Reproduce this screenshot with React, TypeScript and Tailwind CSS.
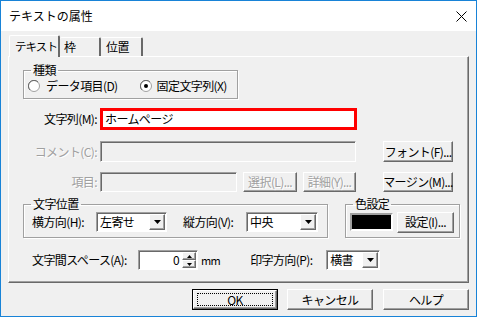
import React from "react";

const raised =
  "border border-t-white border-l-white border-r-[#696969] border-b-[#696969] shadow-[inset_-1px_-1px_0_#a0a0a0]";
const sunken =
  "border border-t-[#a0a0a0] border-l-[#a0a0a0] border-r-white border-b-white shadow-[inset_1px_1px_0_#696969]";
const etched = "border border-[#a0a0a0] shadow-[inset_1px_1px_0_#fff,1px_1px_0_#fff]";
const disabledText = "text-[#a0a0a0] [text-shadow:1px_1px_0_#fff]";

const Btn = ({ children, className = "", disabled = false }: { children: React.ReactNode; className?: string; disabled?: boolean }) => (
  <div className={`flex items-center justify-center bg-[#f0f0f0] ${raised} ${disabled ? disabledText : "text-black"} ${className}`}>
    {children}
  </div>
);

const Arrow = ({ size = 7 }: { size?: number }) => (
  <svg width={size} height={Math.ceil(size / 2)} viewBox={`0 0 ${size} ${Math.ceil(size / 2)}`}>
    <polygon points={`0,0 ${size},0 ${size / 2},${Math.ceil(size / 2)}`} fill="#000" />
  </svg>
);

const Combo = ({ value, className = "" }: { value: string; className?: string }) => (
  <div className={`flex items-center bg-white h-[20px] ${sunken} ${className}`}>
    <span className="flex-1 pl-[3px] leading-none">{value}</span>
    <div className={`w-[16px] h-[16px] mr-[1px] flex items-center justify-center bg-[#f0f0f0] ${raised}`}>
      <Arrow />
    </div>
  </div>
);

const Radio = ({ checked }: { checked?: boolean }) => (
  <svg width="12" height="12" viewBox="0 0 12 12" className="shrink-0">
    <circle cx="6" cy="6" r="5.5" fill="#fff" stroke="#a0a0a0" />
    <path d="M2 10 A5.5 5.5 0 0 1 10 2" fill="none" stroke="#696969" strokeWidth="1" />
    {checked && <circle cx="6" cy="6" r="2" fill="#000" />}
  </svg>
);

const Group = ({ title, className = "", children }: { title: string; className?: string; children: React.ReactNode }) => (
  <fieldset className={`${etched} ${className}`}>
    <legend className="ml-[7px] px-[2px] leading-[14px]">{title}</legend>
    {children}
  </fieldset>
);

export default function App() {
  return (
    <div className="w-[477px] h-[317px] flex flex-col border border-[#1883d7] bg-[#f0f0f0] text-[12px] text-black whitespace-nowrap tracking-[-0.6px] font-['Noto_Sans_CJK_JP',sans-serif] overflow-hidden">
      <div className="h-[30px] bg-white flex items-center justify-between pl-[8px] pr-[9px]">
        <span className="text-[12px] tracking-normal">テキストの属性</span>
        <svg width="11" height="11" viewBox="0 0 11 11">
          <path d="M0.5 0.5 L10.5 10.5 M10.5 0.5 L0.5 10.5" stroke="#000" strokeWidth="1" />
        </svg>
      </div>

      <div className="flex flex-col pl-[7px] pt-[4px]">
        {/* tabs */}
        <div className="flex items-end h-[21px] pl-[1px]">
          <div className="relative z-10 h-[22px] -mb-[1px] w-[51px] bg-[#f0f0f0] border-l border-t border-white border-r-2 border-r-[#696969] rounded-t-[2px] pl-[5px] pt-[2px] leading-[16px] text-[11.5px] tracking-[-0.9px]">
            テキスト
          </div>
          <div className="h-[19px] w-[41px] border-t border-white border-r-2 border-r-[#696969] rounded-t-[2px] pl-[4px] leading-[17px]">枠</div>
          <div className="h-[19px] w-[42px] border-t border-white border-r-2 border-r-[#696969] rounded-t-[2px] pl-[5px] leading-[17px]">位置</div>
        </div>

        {/* panel */}
        <div className="w-[461px] h-[227px] border-l border-t border-white border-r border-b border-r-[#696969] border-b-[#696969] shadow-[inset_-1px_-1px_0_#a0a0a0] flex flex-col">
          <Group title="種類" className="ml-[14px] mt-[6px] w-[215px] h-[36px]">
            <div className="flex items-center h-[18px] pl-[4px]">
              <Radio />
              <span className="ml-[6px]">データ項目(D)</span>
              <span className="ml-[22px] flex"><Radio checked /></span>
              <span className="ml-[5px]">固定文字列(X)</span>
            </div>
          </Group>

          <div className="flex items-center mt-[9px] h-[22px]">
            <span className="w-[88px] text-right">文字列(M):</span>
            <div className="ml-[3px] w-[257px] h-[22px] border-[3px] border-[#ff0000] bg-white pl-[2px] flex items-center">ホームページ</div>
          </div>

          <div className="flex items-center mt-[11px] h-[21px]">
            <span className={`w-[88px] text-right ${disabledText}`}>コメント(C):</span>
            <div className={`ml-[3px] w-[256px] h-[21px] bg-[#f0f0f0] ${sunken}`} />
            <Btn className="ml-[27px] w-[70px] h-[21px]">フォント(F)...</Btn>
          </div>

          <div className="flex items-center mt-[10px] h-[20px]">
            <span className={`w-[88px] text-right ${disabledText}`}>項目:</span>
            <div className={`ml-[3px] w-[137px] h-[20px] bg-[#f0f0f0] ${sunken}`} />
            <Btn disabled className="ml-[6px] w-[54px] h-[20px]">選択(L)...</Btn>
            <Btn disabled className="ml-[6px] w-[53px] h-[20px]">詳細(Y)...</Btn>
            <Btn className="ml-[27px] w-[70px] h-[20px]">マージン(M)...</Btn>
          </div>

          <div className="flex mt-[5px]">
            <Group title="文字位置" className="ml-[14px] w-[305px] h-[41px]">
              <div className="flex items-center h-[20px] mt-[1px]">
                <span className="ml-[8px] w-[64px]">横方向(H):</span>
                <Combo value="左寄せ" className="w-[71px]" />
                <span className="ml-[16px] w-[63px]">縦方向(V):</span>
                <Combo value="中央" className="w-[72px]" />
              </div>
            </Group>
            <Group title="色設定" className="ml-[17px] w-[115px] h-[41px]">
              <div className="flex items-center h-[20px] mt-[1px]">
                <div className="ml-[4px] w-[43px] h-[18px] bg-black border-2 border-t-[#a0a0a0] border-l-[#a0a0a0] border-b-white border-r-white" />
                <Btn className="ml-[4px] w-[57px] h-[21px]">設定(I)...</Btn>
              </div>
            </Group>
          </div>

          <div className="flex items-center mt-[12px] h-[20px]">
            <span className="ml-[23px] w-[106px]">文字間スペース(A):</span>
            <div className={`ml-[0px] w-[60px] h-[20px] bg-white flex items-center ${sunken}`}>
              <span className="flex-1 text-right pr-[3px] leading-none">0</span>
              <div className="flex flex-col w-[14px] h-[16px] mr-[1px]">
                <div className={`h-[8px] flex items-center justify-center bg-[#f0f0f0] ${raised}`}>
                  <svg width="5" height="3" viewBox="0 0 5 3"><polygon points="0,3 5,3 2.5,0" fill="#000" /></svg>
                </div>
                <div className={`h-[8px] flex items-center justify-center bg-[#f0f0f0] ${raised}`}>
                  <Arrow size={5} />
                </div>
              </div>
            </div>
            <span className="ml-[3px] text-[11px]">mm</span>
            <span className="ml-[30px] w-[76px]">印字方向(P):</span>
            <Combo value="横書" className="w-[54px]" />
          </div>
        </div>

        {/* bottom buttons */}
        <div className="flex mt-[6px] pl-[184px]">
          <div className="w-[86px] h-[21px] border border-black">
            <Btn className="w-full h-full">
              <div className="flex items-center justify-center w-[76px] h-[13px] border border-dotted border-black leading-none">OK</div>
            </Btn>
          </div>
          <Btn className="ml-[9px] w-[86px] h-[21px]">キャンセル</Btn>
          <Btn className="ml-[10px] w-[86px] h-[21px]">ヘルプ</Btn>
        </div>
      </div>
    </div>
  );
}
